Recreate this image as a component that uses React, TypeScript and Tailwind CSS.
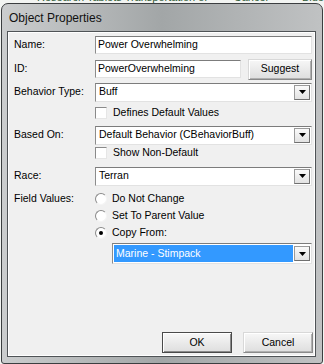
import type { ReactNode } from "react";

const FONT = "font-['Liberation_Sans',Arial,sans-serif]";

function Arrow() {
  return (
    <div className="mr-[1px] flex h-[15px] w-[16px] items-center justify-center border border-[#9a9a9a] border-b-[#707070] border-r-[#707070] bg-gradient-to-b from-[#fafafa] to-[#e2e2e2]">
      <svg width="7" height="4" viewBox="0 0 7 4">
        <path d="M0 0h7L3.5 4z" fill="#000" />
      </svg>
    </div>
  );
}

function Field({ children, className = "" }: { children?: ReactNode; className?: string }) {
  return (
    <div
      className={`flex h-[18px] items-center border border-t-[#7c7c7c] border-l-[#8c8c8c] border-b-[#e2e2e2] border-r-[#e2e2e2] bg-white ${className}`}
    >
      {children}
    </div>
  );
}

function Combo({ value, selected = false, className = "" }: { value: string; selected?: boolean; className?: string }) {
  return (
    <Field className={`h-[19px] ${className}`}>
      <div className="flex h-full flex-1 items-center p-[1px]">
        <div
          className={`flex h-full flex-1 items-center pl-[2px] ${selected ? "bg-[#3399ff] text-white" : ""}`}
        >
          {value}
        </div>
      </div>
      <Arrow />
    </Field>
  );
}

function Button({ label, primary = false, className = "" }: { label: string; primary?: boolean; className?: string }) {
  return (
    <div
      className={`flex h-[21px] items-center justify-center border bg-gradient-to-b from-[#f7f7f7] to-[#dedede] ${
        primary
          ? "border-[#4a4a4a] shadow-[inset_1px_1px_0_#fff,inset_-1px_-1px_0_#8a8a8a]"
          : "border-[#8a8a8a] border-t-[#d8d8d8] border-l-[#d8d8d8] shadow-[inset_1px_1px_0_#fff,inset_-1px_-1px_0_#b0b0b0]"
      } ${className}`}
    >
      {label}
    </div>
  );
}

function Check({ label }: { label: string }) {
  return (
    <div className="flex h-[12px] items-center pl-[87px]">
      <div className="h-[12px] w-[12px] border border-t-[#8a8a8a] border-l-[#8a8a8a] border-b-[#e6e6e6] border-r-[#e6e6e6] bg-white" />
      <span className="ml-[6px]">{label}</span>
    </div>
  );
}

function Radio({ label, checked = false, lead = "" }: { label: string; checked?: boolean; lead?: string }) {
  return (
    <div className="flex h-[17px] items-center">
      <div className="w-[87px] pl-[6px]">{lead}</div>
      <div className="flex h-[12px] w-[12px] items-center justify-center rounded-full border border-t-[#8a8a8a] border-l-[#8a8a8a] border-b-[#f4f4f4] border-r-[#f4f4f4] bg-white">
        {checked && <div className="h-[4px] w-[4px] rounded-full bg-black" />}
      </div>
      <span className="ml-[5px]">{label}</span>
    </div>
  );
}

function Row({ label, children, className = "" }: { label: string; children: ReactNode; className?: string }) {
  return (
    <div className={`flex h-[18px] items-center ${className}`}>
      <div className="w-[87px] shrink-0 pl-[6px]">{label}</div>
      <div className="flex flex-1 items-center pr-[3px]">{children}</div>
    </div>
  );
}

export default function App() {
  return (
    <div className={`flex h-[364px] w-[324px] flex-col overflow-hidden bg-[#f2f4f2] text-[10.5px] text-black ${FONT}`}>
      {/* window underneath, only the bottom of its text shows */}
      <div className="h-[3px] shrink-0 overflow-hidden">
        <div className="-mt-[8px] flex text-[11px] leading-[11px] text-[#2f5a36]">
          <span className="ml-[37px]">Research Tablets Transportation of Units</span>
          <span className="ml-[14px]">Cancel</span>
          <span className="ml-[34px]">Blue</span>
        </div>
      </div>

      <div className="mx-[1px] flex flex-1 flex-col rounded-t-[7px] rounded-b-[3px] border border-[#3b3e40] bg-gradient-to-r from-[#cbcdce] via-[#a2a6a7] to-[#c0c2c3] pl-[5px] pr-[6px]">
        <div className="flex h-[27px] shrink-0 items-center pl-[2px] text-[12px] text-[#111]">Object Properties</div>

        <div className="flex flex-1 flex-col border border-[#4f5356] bg-[#f0f0f0] pb-[3px] shadow-[inset_1px_1px_0_#fff,inset_-1px_-1px_0_#fff]">
          <Row label="Name:" className="mt-[4px]">
            <Field className="flex-1 pl-[2px]">Power Overwhelming</Field>
          </Row>
          <Row label="ID:" className="mt-[6px]">
            <Field className="w-[146px] pl-[2px]">PowerOverwhelming</Field>
            <Button label="Suggest" className="ml-[7px] h-[20px] flex-1" />
          </Row>
          <Row label="Behavior Type:" className="mt-[5px]">
            <Combo value="Buff" className="flex-1" />
          </Row>
          <div className="mt-[6px]">
            <Check label="Defines Default Values" />
          </div>
          <Row label="Based On:" className="mt-[7px]">
            <Combo value="Default Behavior (CBehaviorBuff)" className="flex-1" />
          </Row>
          <div className="mt-[3px]">
            <Check label="Show Non-Default" />
          </div>
          <Row label="Race:" className="mt-[8px]">
            <Combo value="Terran" className="flex-1" />
          </Row>
          <div className="mt-[5px] flex flex-col">
            <Radio lead="Field Values:" label="Do Not Change" />
            <Radio label="Set To Parent Value" />
            <Radio label="Copy From:" checked />
          </div>
          <div className="mt-[2px] flex pl-[104px] pr-[3px]">
            <Combo value="Marine - Stimpack" selected className="h-[21px] flex-1" />
          </div>

          <div className="flex-1" />

          <div className="flex justify-end gap-[11px] pr-[2px]">
            <Button label="OK" primary className="w-[70px]" />
            <Button label="Cancel" className="w-[70px]" />
          </div>
        </div>

        <div className="h-[6px] shrink-0" />
      </div>
    </div>
  );
}
